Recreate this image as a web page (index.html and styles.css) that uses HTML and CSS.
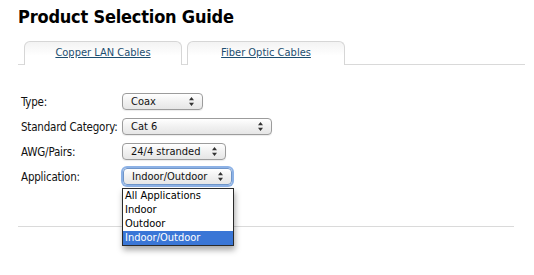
FILE: index.html
```html
<!DOCTYPE html>
<html>
<head>
<meta charset="utf-8">
<link rel="stylesheet" href="styles.css">
</head>
<body>
<div class="page">
  <h1 class="title">Product Selection Guide</h1>
  <div class="tabs">
    <a class="tab active" href="#">Copper LAN Cables</a>
    <a class="tab" href="#">Fiber Optic Cables</a>
  </div>
  <div class="form">
    <div class="row">
      <span class="label">Type:</span>
      <span class="select w-type"><span class="val">Coax</span><svg class="arrows" width="5" height="9" viewBox="0 0 5 9"><path d="M2.5 0 L5 3.2 L0 3.2 Z M2.5 9 L5 5.8 L0 5.8 Z" fill="#333"/></svg></span>
    </div>
    <div class="row">
      <span class="label">Standard Category:</span>
      <span class="select w-cat"><span class="val">Cat 6</span><svg class="arrows" width="5" height="9" viewBox="0 0 5 9"><path d="M2.5 0 L5 3.2 L0 3.2 Z M2.5 9 L5 5.8 L0 5.8 Z" fill="#333"/></svg></span>
    </div>
    <div class="row">
      <span class="label">AWG/Pairs:</span>
      <span class="select w-awg"><span class="val">24/4 stranded</span><svg class="arrows" width="5" height="9" viewBox="0 0 5 9"><path d="M2.5 0 L5 3.2 L0 3.2 Z M2.5 9 L5 5.8 L0 5.8 Z" fill="#333"/></svg></span>
    </div>
    <div class="row">
      <span class="label">Application:</span>
      <span class="select w-app focus"><span class="val">Indoor/Outdoor</span><svg class="arrows" width="5" height="9" viewBox="0 0 5 9"><path d="M2.5 0 L5 3.2 L0 3.2 Z M2.5 9 L5 5.8 L0 5.8 Z" fill="#333"/></svg>
        <ul class="menu">
          <li>All Applications</li>
          <li>Indoor</li>
          <li>Outdoor</li>
          <li class="sel">Indoor/Outdoor</li>
        </ul>
      </span>
    </div>
  </div>
  <div class="rule"></div>
</div>
</body>
</html>
```
FILE: styles.css
```css
html, body {
  margin: 0;
  padding: 0;
  background: #fff;
}
body {
  font-family: "DejaVu Sans Condensed", "DejaVu Sans", sans-serif;
  color: #111;
}
.page {
  box-sizing: border-box;
  min-height: 275px;
  padding: 0 0 0 18px;
  width: 534px;
}
.title {
  margin: 0;
  padding-top: 5px;
  height: 36px;
  font-size: 18px;
  line-height: 24px;
  font-weight: bold;
  letter-spacing: -0.2px;
  color: #000;
}
.tabs {
  display: flex;
  gap: 5px;
  padding-left: 6px;
  border-bottom: 1px solid #d9d9d9;
  height: 23px;
  width: 501px;
}
.tab {
  box-sizing: border-box;
  width: 158px;
  height: 24px;
  border: 1px solid #d6d6d6;
  border-bottom: none;
  border-radius: 6px 6px 0 0;
  background: linear-gradient(#f3f3f3, #fff 60%);
  text-align: center;
  font-size: 11px;
  line-height: 22px;
  color: #1d4e70;
  text-decoration: underline;
}
.form {
  padding: 28px 0 0 3px;
  display: flex;
  flex-direction: column;
  gap: 8px;
  height: 133px;
}
.row {
  display: flex;
  align-items: center;
  height: 17px;
}
.label {
  flex: 0 0 101px;
  font-size: 11.5px;
  letter-spacing: -0.2px;
  color: #111;
  white-space: nowrap;
}
.select {
  position: relative;
  box-sizing: border-box;
  height: 17px;
  display: flex;
  align-items: center;
  justify-content: space-between;
  padding: 0 8px 0 8px;
  border: 1px solid #9c9c9c;
  border-radius: 4px;
  background: linear-gradient(#ffffff, #f1f1f1 50%, #e6e6e6);
  box-shadow: 0 1px 1px rgba(0,0,0,0.08);
  font-size: 11px;
  color: #111;
}
.w-type { width: 81px; }
.w-cat { width: 150px; }
.w-awg { width: 104px; }
.w-app {
  width: 109px;
  margin-left: 1px;
}
.focus {
  border-color: #6f95c9;
  box-shadow: 0 0 0 2px #8db2e6;
}
.menu {
  position: absolute;
  z-index: 5;
  left: -2px;
  top: 19px;
  margin: 0;
  padding: 0;
  list-style: none;
  width: 112px;
  box-sizing: border-box;
  border: 1px solid #2a2a2a;
  background: #fff;
  box-shadow: 1px 4px 6px rgba(0,0,0,0.35);
  font-size: 11px;
  line-height: 14px;
}
.menu li {
  padding-left: 2px;
  white-space: nowrap;
  color: #000;
}
.menu li.sel {
  background: #3a76d6;
  color: #fff;
}
.rule {
  border-top: 1px solid #dadada;
  width: 496px;
}
```
